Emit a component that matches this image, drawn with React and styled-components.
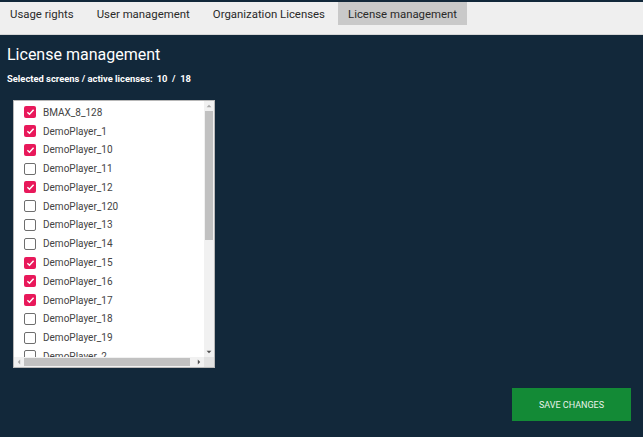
import React from "react";
import styled, { createGlobalStyle } from "styled-components";

const Global = createGlobalStyle`
  html, body { margin: 0; padding: 0; width: 643px; height: 437px; overflow: hidden; background: #12283a; }
  body { font-family: Roboto, "Liberation Sans", sans-serif; }
  * { box-sizing: border-box; }
`;

const Page = styled.div`
  width: 643px;
  height: 437px;
  background: #12283a;
  display: flex;
  flex-direction: column;
  padding-top: 2px;
`;

const TabBar = styled.div`
  height: 33px;
  background: #efefef;
  border-bottom: 1px solid #d6d6d6;
  display: flex;
  align-items: flex-start;
  gap: 3px;
`;

const Tab = styled.div`
  height: 23px;
  padding: 0 10px;
  display: flex;
  align-items: center;
  font-size: 11.4px;
  color: #2a2a2a;
  background: ${(p) => (p.$active ? "#c9c9c9" : "transparent")};
  white-space: nowrap;
`;

const Content = styled.div`
  flex: 1;
  display: flex;
  flex-direction: column;
  padding: 10px 0 0 7px;
`;

const Title = styled.h1`
  margin: 0;
  font-weight: 400;
  font-size: 16px;
  line-height: 20px;
  color: #ffffff;
`;

const Summary = styled.div`
  margin-top: 8px;
  font-size: 9.4px;
  font-weight: 700;
  color: #ffffff;
  span { margin-left: 4px; }
`;

const ListBox = styled.div`
  margin: 16px 0 0 6px;
  width: 202px;
  height: 268px;
  background: #ffffff;
  border: 1px solid #b8b8b8;
  display: grid;
  grid-template-columns: 1fr 10px;
  grid-template-rows: 1fr 10px;
`;

const Viewport = styled.div`
  overflow: hidden;
  padding-top: 2px;
`;

const Row = styled.label`
  height: 18.77px;
  display: flex;
  align-items: center;
  gap: 7px;
  padding-left: 10px;
  font-size: 10px;
  color: #444;
  white-space: nowrap;
`;

const Box = styled.span`
  width: 12px;
  height: 12px;
  flex: none;
  border-radius: 2px;
  display: flex;
  align-items: center;
  justify-content: center;
  background: ${(p) => (p.$checked ? "#e8185a" : "#fff")};
  border: ${(p) => (p.$checked ? "none" : "1.5px solid #6e6e6e")};
`;

const VBar = styled.div`
  background: #f1f1f1;
  display: flex;
  flex-direction: column;
  align-items: center;
`;

const HBar = styled.div`
  background: #f1f1f1;
  display: flex;
  align-items: center;
`;

const Corner = styled.div`
  background: #e2e2e2;
`;

const Arrow = styled.div`
  flex: none;
  width: 10px;
  height: 10px;
  display: flex;
  align-items: center;
  justify-content: center;
`;

const VThumb = styled.div`
  width: 8px;
  height: 129px;
  background: #c1c1c1;
`;

const VTrack = styled.div`
  flex: 1;
  width: 100%;
  display: flex;
  flex-direction: column;
  align-items: center;
`;

const HTrack = styled.div`
  flex: 1;
  height: 100%;
  display: flex;
  align-items: center;
`;

const HThumb = styled.div`
  height: 8px;
  width: 166px;
  background: #c1c1c1;
`;

const Footer = styled.div`
  margin-top: auto;
  display: flex;
  justify-content: flex-end;
  padding: 0 12px 16px 0;
`;

const SaveButton = styled.button`
  width: 119px;
  height: 33px;
  border: none;
  background: #138a36;
  color: #e8f3ea;
  font-family: Roboto, "Liberation Sans", sans-serif;
  font-size: 9px;
  text-transform: uppercase;
  padding: 0;
`;

const Tri = ({ dir }) => {
  const vert = dir === "up" || dir === "down";
  const pts = {
    up: "1,5 5,1 9,5",
    down: "1,1 5,5 9,1",
    left: "5,1 1,5 5,9",
    right: "1,1 5,5 1,9",
  }[dir];
  return (
    <svg width={vert ? 6 : 4} height={vert ? 4 : 6} viewBox={vert ? "0 0 10 6" : "0 0 6 10"}>
      <polygon points={pts} fill={dir === "up" || dir === "left" ? "#a8a8a8" : "#505050"} />
    </svg>
  );
};

const items = [
  ["BMAX_8_128", true],
  ["DemoPlayer_1", true],
  ["DemoPlayer_10", true],
  ["DemoPlayer_11", false],
  ["DemoPlayer_12", true],
  ["DemoPlayer_120", false],
  ["DemoPlayer_13", false],
  ["DemoPlayer_14", false],
  ["DemoPlayer_15", true],
  ["DemoPlayer_16", true],
  ["DemoPlayer_17", true],
  ["DemoPlayer_18", false],
  ["DemoPlayer_19", false],
  ["DemoPlayer_2", false],
];

const Check = () => (
  <svg width="9" height="8" viewBox="0 0 9 8">
    <path d="M1.4 4.2 L3.5 6.2 L7.6 1.8" stroke="#fff" strokeWidth="1.5" fill="none" />
  </svg>
);

export default function App() {
  return (
    <Page>
      <Global />
      <TabBar>
        <Tab>Usage rights</Tab>
        <Tab>User management</Tab>
        <Tab>Organization Licenses</Tab>
        <Tab $active>License management</Tab>
      </TabBar>
      <Content>
        <Title>License management</Title>
        <Summary>
          Selected screens / active licenses:<span>10&nbsp;&nbsp;/&nbsp;&nbsp;18</span>
        </Summary>
        <ListBox>
          <Viewport>
            {items.map(([name, c]) => (
              <Row key={name}>
                <Box $checked={c}>{c && <Check />}</Box>
                {name}
              </Row>
            ))}
          </Viewport>
          <VBar>
            <Arrow><Tri dir="up" /></Arrow>
            <VTrack><VThumb /></VTrack>
            <Arrow><Tri dir="down" /></Arrow>
          </VBar>
          <HBar>
            <Arrow><Tri dir="left" /></Arrow>
            <HTrack><HThumb /></HTrack>
            <Arrow><Tri dir="right" /></Arrow>
          </HBar>
          <Corner />
        </ListBox>
        <Footer>
          <SaveButton>Save changes</SaveButton>
        </Footer>
      </Content>
    </Page>
  );
}
